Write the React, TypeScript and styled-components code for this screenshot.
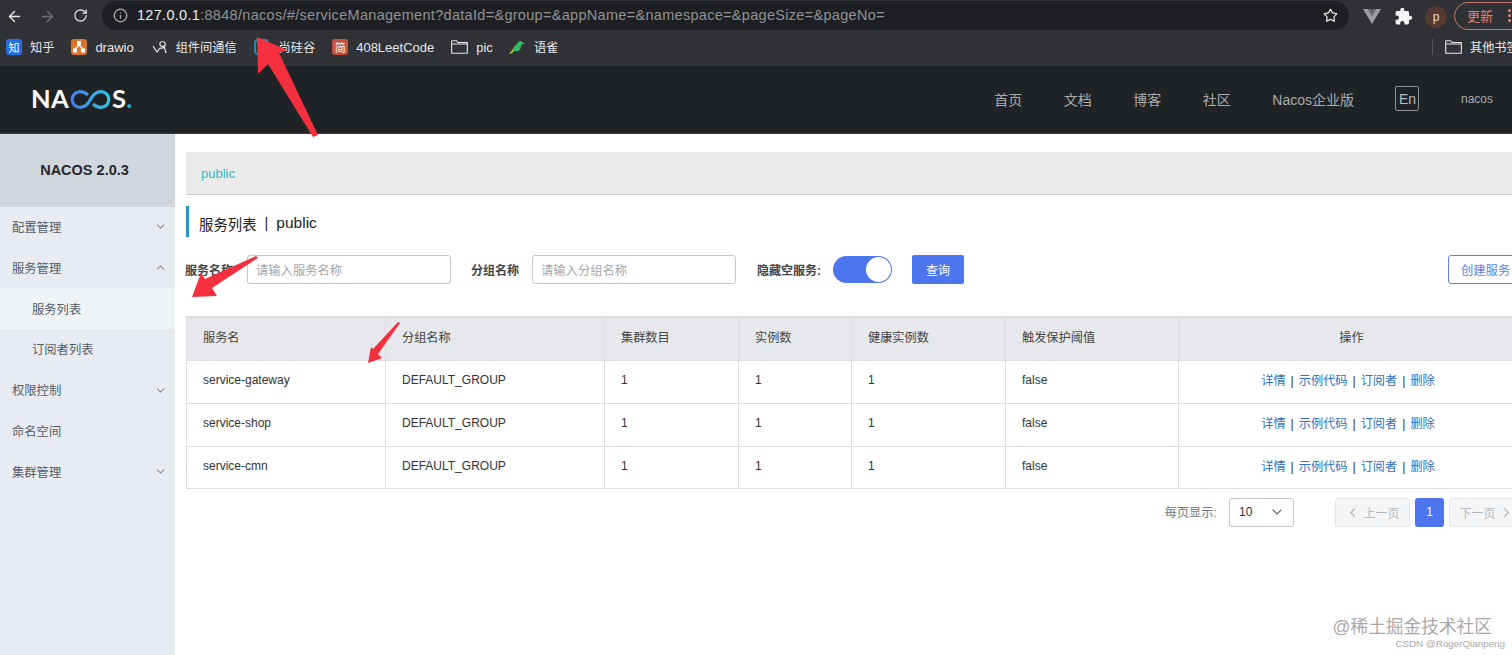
import React from "react";
import styled, { createGlobalStyle } from "styled-components";
import { ArrowLeft, ArrowRight, RotateCw, Info, Star, ChevronDown, ChevronUp, ChevronLeft, ChevronRight } from "lucide-react";
import { MdExtension } from "react-icons/md";

const FONT = `"Liberation Sans", "Noto Sans CJK SC", sans-serif`;

const Global = createGlobalStyle`
  html, body { margin: 0; padding: 0; background: #fff; overflow: hidden; }
  * { box-sizing: border-box; }
  body { font-family: ${FONT}; }
`;

const Page = styled.div`
  position: relative;
  width: 1512px;
  height: 655px;
  overflow: hidden;
  background: #fff;
`;

const Toolbar = styled.div`
  display: flex;
  align-items: center;
  height: 33px;
  background: #303135;
  color: #dfe1e5;
`;
const NavButton = styled.div<{ $dim?: boolean }>`
  flex: none;
  width: 33px;
  display: flex;
  justify-content: center;
  color: ${(p) => (p.$dim ? "#6f7175" : "#e4e6ea")};
`;
const NavGroup = styled.div`
  flex: none;
  display: flex;
  margin-left: -2px;
  margin-right: 5px;
`;
const Address = styled.div`
  flex: none;
  width: 1247px;
  height: 29px;
  margin-top: -3px;
  border-radius: 15px;
  background: #1e1f22;
  display: flex;
  align-items: center;
  padding: 0 11px;
  font-size: 14.5px;
  letter-spacing: 0.3px;
  color: #8f9296;
`;
const Host = styled.span`
  color: #eceef1;
  margin-left: 9px;
`;
const Url = styled.span`
  flex: 1;
  white-space: nowrap;
`;
const ToolIcons = styled.div`
  flex: none;
  display: flex;
  align-items: center;
  margin-left: 14px;
`;
const VueMark = styled.svg`
  width: 18px;
  height: 15px;
  margin-right: 13px;
  margin-top: -1px;
`;
const PuzzleIcon = styled(MdExtension)`
  color: #f4f5f6;
  width: 19px;
  height: 19px;
  margin-right: 12px;
`;
const Avatar = styled.div`
  flex: none;
  width: 22px;
  height: 22px;
  border-radius: 50%;
  background: #53392f;
  color: #eadfd8;
  font-size: 12px;
  display: flex;
  align-items: center;
  justify-content: center;
  margin-right: 7px;
`;
const UpdatePill = styled.div`
  flex: none;
  width: 80px;
  height: 28px;
  border: 1px solid #c9736b;
  border-radius: 15px;
  color: #ea7d72;
  font-size: 13px;
  display: flex;
  align-items: center;
  padding-left: 12px;
  margin-top: -2px;
`;
const MenuDots = styled.div`
  display: flex;
  flex-direction: column;
  gap: 2px;
  margin-left: 15px;
`;
const MenuDot = styled.div`
  width: 3px;
  height: 3px;
  border-radius: 50%;
  background: #ea7d72;
`;

const Bookmarks = styled.div`
  display: flex;
  align-items: center;
  height: 33px;
  background: #313236;
  padding: 0 0 5px 6px;
  color: #e6e7ea;
  font-size: 12px;
`;
const Bookmark = styled.div<{ $gap?: number; $inner?: number; $latin?: boolean }>`
  flex: none;
  display: flex;
  align-items: center;
  gap: ${(p) => p.$inner ?? 8}px;
  margin-right: ${(p) => p.$gap ?? 17}px;
  font-size: ${(p) => (p.$latin ? 13 : 12.2)}px;
`;
const BookIcon = styled.div<{ $bg: string }>`
  flex: none;
  width: 16px;
  height: 16px;
  border-radius: 3px;
  background: ${(p) => p.$bg};
  color: #fff;
  font-size: 11px;
  display: flex;
  align-items: center;
  justify-content: center;
`;
const RingIcon = styled.div`
  flex: none;
  width: 15px;
  height: 16px;
  border: 2px solid #2b86b8;
  border-radius: 4px;
`;
const BookSpacer = styled.div`
  flex: 1;
`;
const BookDivider = styled.div`
  width: 1px;
  height: 16px;
  background: #55565a;
  margin-right: 12px;
`;
const Clipped = styled.div`
  width: 42px;
  white-space: nowrap;
  overflow: hidden;
`;
const FolderSvg = styled.svg`
  flex: none;
  width: 17px;
  height: 14px;
  color: #e6e7ea;
`;

const Header = styled.header`
  height: 68px;
  background: #1f2326;
  border-bottom: 1px solid #3a3c3f;
  display: flex;
  align-items: center;
  padding: 0 19px 2px 31px;
  color: #a9abad;
`;
const Logo = styled.div`
  display: flex;
  align-items: center;
  color: #fff;
  font-family: "Lato", ${FONT};
  font-weight: 700;
  font-size: 25.5px;
  line-height: 1;
  letter-spacing: 0.3px;
`;
const LogoDot = styled.span`
  color: #28b8d6;
`;
const LogoLoop = styled.svg`
  width: 43px;
  height: 19px;
  margin: 1px 0 0 0;
`;
const HeaderNav = styled.nav`
  margin-left: auto;
  display: flex;
  align-items: center;
  gap: 41.5px;
  font-size: 14px;
`;
const LangBox = styled.div`
  width: 24px;
  height: 25px;
  border: 1px solid #8c8e90;
  border-radius: 2px;
  display: flex;
  align-items: center;
  justify-content: center;
  color: #b9bbbd;
`;
const UserName = styled.span`
  font-size: 12px;
`;

const Body = styled.div`
  display: flex;
  height: 521px;
`;
const Sidebar = styled.aside`
  flex: none;
  width: 175px;
  background: #e8ecf2;
  color: #555c66;
  font-size: 12.3px;
`;
const SideTitle = styled.div`
  height: 72.6px;
  background: #d2d7dd;
  color: #26292d;
  font-size: 14.5px;
  font-weight: 700;
  display: flex;
  align-items: center;
  justify-content: center;
  padding-right: 6px;
`;
const SideRow = styled.div<{ $sub?: boolean; $active?: boolean }>`
  height: 40.8px;
  display: flex;
  align-items: center;
  justify-content: space-between;
  padding: 0 8px 0 ${(p) => (p.$sub ? 32 : 12)}px;
  background: ${(p) => (p.$active ? "#f0f3f6" : "transparent")};
`;

const Main = styled.main`
  flex: none;
  width: 1338px;
  margin-left: 11px;
  padding-top: 18px;
  color: #333;
  font-size: 12px;
`;
const Crumb = styled.div`
  height: 43px;
  background: #ebebeb;
  border-bottom: 1px solid #cfcfcf;
  display: flex;
  align-items: center;
  padding: 1px 0 0 15px;
  font-size: 13px;
  color: #2bbcc9;
`;
const Title = styled.h2`
  margin: 11px 0 0;
  height: 31px;
  border-left: 3px solid #2a94c4;
  padding: 3px 0 0 10px;
  display: flex;
  align-items: center;
  gap: 8px;
  font-size: 14.4px;
  font-weight: 400;
  color: #222;
`;
const TitleName = styled.span`
  font-size: 15.5px;
`;
const FilterRow = styled.div`
  display: flex;
  align-items: center;
  height: 29px;
  margin-top: 18px;
  margin-left: -1px;
`;
const FieldLabel = styled.label<{ $w: number }>`
  width: ${(p) => p.$w}px;
  flex: none;
  font-weight: 700;
  color: #444;
  font-size: 12px;
`;
const TextBox = styled.div<{ $mr: number }>`
  width: 204px;
  height: 29px;
  flex: none;
  border: 1px solid #c4c6cf;
  border-radius: 3px;
  padding-left: 8px;
  display: flex;
  align-items: center;
  color: #a3a6ad;
  font-size: 12.3px;
  margin-right: ${(p) => p.$mr}px;
`;
const Toggle = styled.div`
  flex: none;
  width: 59px;
  height: 27px;
  border-radius: 14px;
  background: #4d75ee;
  display: flex;
  justify-content: flex-end;
  padding: 1px;
  margin-right: 20px;
`;
const Knob = styled.div`
  width: 25px;
  height: 25px;
  border-radius: 50%;
  background: #fff;
`;
const PrimaryBtn = styled.div`
  flex: none;
  width: 52px;
  height: 29px;
  border-radius: 2px;
  background: #4d75ee;
  color: #fff;
  font-size: 12px;
  display: flex;
  align-items: center;
  justify-content: center;
`;
const OutlineBtn = styled.div`
  margin-left: auto;
  flex: none;
  width: 76px;
  height: 29px;
  border: 1px solid #5d80ea;
  border-radius: 3px;
  color: #5d80ea;
  font-size: 12.3px;
  display: flex;
  align-items: center;
  padding-left: 12px;
`;

const Table = styled.table`
  width: 1338px;
  margin-top: 32px;
  border-collapse: collapse;
  table-layout: fixed;
  font-size: 12px;
  tbody tr:last-child td {
    height: 42px;
  }
`;
const Col = styled.col<{ $w: number }>`
  width: ${(p) => p.$w}px;
`;
const Th = styled.th<{ $center?: boolean }>`
  height: 43px;
  background: #e6e8ec;
  border: 1px solid #dcdee3;
  border-top-width: 2px;
  padding: 0 16px 3px;
  font-size: 12.2px;
  font-weight: 400;
  color: #444;
  text-align: ${(p) => (p.$center ? "center" : "left")};
`;
const Td = styled.td<{ $center?: boolean }>`
  height: 43px;
  border: 1px solid #dcdee3;
  padding: 0 16px 3px;
  color: #333;
  text-align: ${(p) => (p.$center ? "center" : "left")};
`;
const OpGroup = styled.span`
  margin-right: 7px;
  font-size: 12.2px;
`;
const OpLink = styled.a`
  color: #2f6fc4;
`;
const OpSep = styled.span`
  color: #333;
  margin: 0 5px;
`;

const Pager = styled.div`
  display: flex;
  align-items: center;
  justify-content: flex-end;
  height: 29px;
  margin-top: 9px;
  font-size: 12px;
`;
const PagerLabel = styled.span`
  color: #777;
  font-size: 12.3px;
  margin-right: 12px;
`;
const Select = styled.div`
  width: 65px;
  height: 29px;
  border: 1px solid #c4c6cf;
  border-radius: 3px;
  display: flex;
  align-items: center;
  justify-content: space-between;
  padding: 0 8px 0 9px;
  color: #333;
  margin-right: 41px;
`;
const PageBtn = styled.div`
  width: 75px;
  height: 29px;
  background: #f4f5f7;
  border: 1px solid #e4e6ea;
  border-radius: 3px;
  color: #b5b8bf;
  display: flex;
  align-items: center;
  justify-content: center;
  gap: 3px;
`;
const PageCurrent = styled.div`
  width: 29px;
  height: 29px;
  margin: 0 5px;
  background: #4d75ee;
  border-radius: 3px;
  color: #fff;
  display: flex;
  align-items: center;
  justify-content: center;
`;

const Watermark = styled.div`
  position: absolute;
  right: 20px;
  top: 612px;
  font-size: 17.7px;
  color: #a9a9a9;
`;
const Credit = styled.div`
  position: absolute;
  right: 7px;
  top: 638px;
  font-size: 9.8px;
  color: #a8a8a8;
`;
const Annotation = styled.svg`
  position: absolute;
  inset: 0;
  width: 1512px;
  height: 655px;
  pointer-events: none;
`;

const sideItems: { label: string; icon?: "down" | "up"; sub?: boolean; active?: boolean }[] = [
  { label: "配置管理", icon: "down" },
  { label: "服务管理", icon: "up" },
  { label: "服务列表", sub: true, active: true },
  { label: "订阅者列表", sub: true },
  { label: "权限控制", icon: "down" },
  { label: "命名空间" },
  { label: "集群管理", icon: "down" },
];
const columns = [
  { label: "服务名", w: 199 },
  { label: "分组名称", w: 219 },
  { label: "集群数目", w: 134 },
  { label: "实例数", w: 113 },
  { label: "健康实例数", w: 154 },
  { label: "触发保护阈值", w: 173 },
];
const rows = ["service-gateway", "service-shop", "service-cmn"];

const FolderIcon = () => (
  <FolderSvg viewBox="0 0 17 14">
    <path d="M.7 13.300V1.200q0-.5.5-.5h4.300l1.500 1.800h9.300v10.800z M.7 4h15.600" fill="none" stroke="currentColor" strokeWidth="1.100" />
  </FolderSvg>
);

export default function App() {
  return (
    <Page>
      <Global />
      <Toolbar>
        <NavGroup>
          <NavButton><ArrowLeft size={17} /></NavButton>
          <NavButton $dim><ArrowRight size={17} /></NavButton>
          <NavButton><RotateCw size={15} /></NavButton>
        </NavGroup>
        <Address>
          <Info size={15} color="#b4b6ba" />
          <Url>
            <Host>127.0.0.1</Host>:8848/nacos/#/serviceManagement?dataId=&amp;group=&amp;appName=&amp;namespace=&amp;pageSize=&amp;pageNo=
          </Url>
          <Star size={15} color="#e6e7ea" />
        </Address>
        <ToolIcons>
          <VueMark viewBox="0 0 18 15">
            <path d="M0 0h5l4 7 4-7h5L9 15z" fill="#9a9ca0" />
            <path d="M5 0h3l1 2 1-2h3L9 7z" fill="#6b6d71" />
          </VueMark>
          <PuzzleIcon />
          <Avatar>p</Avatar>
          <UpdatePill>
            更新
            <MenuDots><MenuDot /><MenuDot /><MenuDot /></MenuDots>
          </UpdatePill>
        </ToolIcons>
      </Toolbar>
      <Bookmarks>
        <Bookmark $gap={17}><BookIcon $bg="#1e6fe8">知</BookIcon>知乎</Bookmark>
        <Bookmark $gap={18} $latin>
          <BookIcon $bg="#d9742a">
            <svg width="14" height="14" viewBox="0 0 14 14">
              <path d="M7 5L3 9M7 5l4 4" stroke="#fff" strokeWidth="1.200" />
              <path d="M5 1h4v4H5zM1 8.500h4v4H1zM9 8.500h4v4H9z" fill="#fff" />
            </svg>
          </BookIcon>
          drawio
        </Bookmark>
        <Bookmark $gap={17}>
          <BookIcon $bg="transparent">
            <svg width="16" height="16" viewBox="0 0 16 16">
              <path d="M1 7l4 6 3-4M8 9c4 1 6-2 5-5-1-2-4-2-5 0-1 3 2 4 4 3l2 7" fill="none" stroke="#e6e7ea" strokeWidth="1.200" />
            </svg>
          </BookIcon>
          组件间通信
        </Bookmark>
        <Bookmark $gap={17} $inner={10}><RingIcon />尚硅谷</Bookmark>
        <Bookmark $gap={17} $latin><BookIcon $bg="#c9513f">简</BookIcon>408LeetCode</Bookmark>
        <Bookmark $gap={16} $latin><FolderIcon />pic</Bookmark>
        <Bookmark $inner={9}>
          <BookIcon $bg="transparent">
            <svg width="17" height="16" viewBox="0 0 17 16">
              <path d="M0 15c3 0 4-1 5-3 1 1 5 1 7-2 1-2 1-4 2-5l3-1-3-1c-1-2-3-2-4 0C8 5 5 7 4 10c-1 2-2 4-4 5z" fill="#35b861" />
              <path d="M0 15c2-1 3-3 4-5 0 1 0 2 1 2-1 2-2 3-5 3z" fill="#d9d34a" />
            </svg>
          </BookIcon>
          语雀
        </Bookmark>
        <BookSpacer />
        <BookDivider />
        <Bookmark $gap={0}><FolderIcon /><Clipped>其他书签</Clipped></Bookmark>
      </Bookmarks>
      <Header>
        <Logo>
          NA
          <LogoLoop viewBox="0 0 43 19">
            <defs>
              <linearGradient id="loop" x1="0" x2="1">
                <stop offset="0" stopColor="#4a7de8" />
                <stop offset="1" stopColor="#2cc6e0" />
              </linearGradient>
            </defs>
            <path d="M19 5C16.500 2.800 14 1.700 11 1.700a7.800 7.800 0 0 0 0 15.600c5 0 8-3 10.500-7.800S27 1.700 32 1.700a7.800 7.800 0 0 1 0 15.600c-3 0-5.500-1-8-3.300" fill="none" stroke="url(#loop)" strokeWidth="3.200" />
          </LogoLoop>
          S<LogoDot>.</LogoDot>
        </Logo>
        <HeaderNav>
          <span>首页</span>
          <span>文档</span>
          <span>博客</span>
          <span>社区</span>
          <span>Nacos企业版</span>
          <LangBox>En</LangBox>
          <UserName>nacos</UserName>
        </HeaderNav>
      </Header>
      <Body>
        <Sidebar>
          <SideTitle>NACOS 2.0.3</SideTitle>
          {sideItems.map((s) => (
            <SideRow key={s.label} $sub={s.sub} $active={s.active}>
              {s.label}
              {s.icon === "down" && <ChevronDown size={13} color="#8a909a" />}
              {s.icon === "up" && <ChevronUp size={13} color="#8a909a" />}
            </SideRow>
          ))}
        </Sidebar>
        <Main>
          <Crumb>public</Crumb>
          <Title>服务列表<span>|</span><TitleName>public</TitleName></Title>
          <FilterRow>
            <FieldLabel $w={62}>服务名称</FieldLabel>
            <TextBox $mr={20}>请输入服务名称</TextBox>
            <FieldLabel $w={61}>分组名称</FieldLabel>
            <TextBox $mr={21}>请输入分组名称</TextBox>
            <FieldLabel $w={76}>隐藏空服务:</FieldLabel>
            <Toggle><Knob /></Toggle>
            <PrimaryBtn>查询</PrimaryBtn>
            <OutlineBtn>创建服务</OutlineBtn>
          </FilterRow>
          <Table>
            <colgroup>
              {columns.map((c) => <Col key={c.label} $w={c.w} />)}
              <Col $w={346} />
            </colgroup>
            <thead>
              <tr>
                {columns.map((c) => <Th key={c.label}>{c.label}</Th>)}
                <Th $center>操作</Th>
              </tr>
            </thead>
            <tbody>
              {rows.map((r) => (
                <tr key={r}>
                  <Td>{r}</Td>
                  <Td>DEFAULT_GROUP</Td>
                  <Td>1</Td>
                  <Td>1</Td>
                  <Td>1</Td>
                  <Td>false</Td>
                  <Td $center>
                    <OpGroup>
                      <OpLink>详情</OpLink><OpSep>|</OpSep>
                      <OpLink>示例代码</OpLink><OpSep>|</OpSep>
                      <OpLink>订阅者</OpLink><OpSep>|</OpSep>
                      <OpLink>删除</OpLink>
                    </OpGroup>
                  </Td>
                </tr>
              ))}
            </tbody>
          </Table>
          <Pager>
            <PagerLabel>每页显示:</PagerLabel>
            <Select>10<ChevronDown size={16} color="#777" /></Select>
            <PageBtn><ChevronLeft size={15} />上一页</PageBtn>
            <PageCurrent>1</PageCurrent>
            <PageBtn>下一页<ChevronRight size={15} /></PageBtn>
          </Pager>
        </Main>
      </Body>
      <Watermark>@稀土掘金技术社区</Watermark>
      <Credit>CSDN @RogerQianpeng</Credit>
      <Annotation viewBox="0 0 1512 655">
        <path d="M257 37 L258 74 L268 64 L313 137 L318 135 L279 53 L287 50 Z" fill="#f4303f" />
        <path d="M192 297 L217 296 L212 288 L258 258 L256 256 L205 279 L201 273 Z" fill="#f4303f" />
        <path d="M368 363 L382 358 L378 354 L400 323 L398 322 L373 349 L371 347 Z" fill="#f4303f" />
      </Annotation>
    </Page>
  );
}
